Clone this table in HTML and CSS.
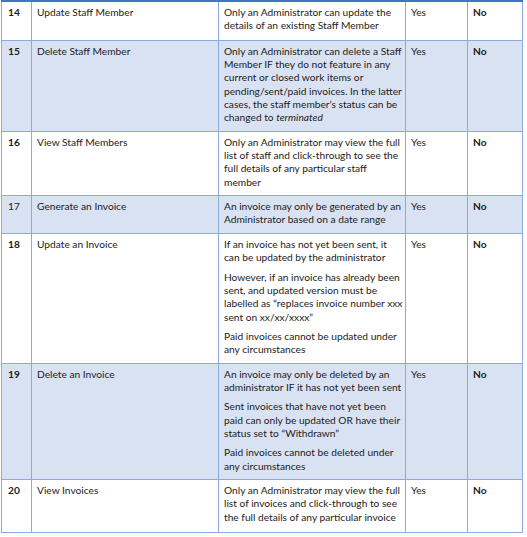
FILE: index.html
```html
<!DOCTYPE html>
<html>
<head>
<meta charset="utf-8">
<link rel="stylesheet" href="styles.css">
</head>
<body>
<table class="grid">
  <colgroup>
    <col class="c-num"><col class="c-name"><col class="c-desc"><col class="c-yes"><col class="c-no">
  </colgroup>
  <tbody>
    <tr class="first">
      <td class="num"><p>14</p></td>
      <td><p>Update Staff Member</p></td>
      <td><p>Only an Administrator can update the<br>details of an existing Staff Member</p></td>
      <td><p>Yes</p></td>
      <td class="no"><p>No</p></td>
    </tr>
    <tr class="shade">
      <td class="num"><p>15</p></td>
      <td><p>Delete Staff Member</p></td>
      <td><p>Only an Administrator can delete a Staff<br>Member IF they do not feature in any<br>current or closed work items or<br>pending/sent/paid invoices. In the latter<br>cases, the staff member’s status can be<br>changed to <em>terminated</em></p></td>
      <td><p>Yes</p></td>
      <td class="no"><p>No</p></td>
    </tr>
    <tr>
      <td class="num"><p>16</p></td>
      <td><p>View Staff Members</p></td>
      <td><p>Only an Administrator may view the full<br>list of staff and click-through to see the<br>full details of any particular staff<br>member</p></td>
      <td><p>Yes</p></td>
      <td class="no"><p>No</p></td>
    </tr>
    <tr class="shade">
      <td class="num light"><p>17</p></td>
      <td><p>Generate an Invoice</p></td>
      <td><p>An invoice may only be generated by an<br>Administrator based on a date range</p></td>
      <td><p>Yes</p></td>
      <td class="no"><p>No</p></td>
    </tr>
    <tr>
      <td class="num"><p>18</p></td>
      <td><p>Update an Invoice</p></td>
      <td>
        <p>If an invoice has not yet been sent, it<br>can be updated by the administrator</p>
        <p>However, if an invoice has already been<br>sent, and updated version must be<br>labelled as “replaces invoice number xxx<br>sent on xx/xx/xxxx”</p>
        <p>Paid invoices cannot be updated under<br>any circumstances</p>
      </td>
      <td><p>Yes</p></td>
      <td class="no"><p>No</p></td>
    </tr>
    <tr class="shade">
      <td class="num"><p>19</p></td>
      <td><p>Delete an Invoice</p></td>
      <td>
        <p>An invoice may only be deleted by an<br>administrator IF it has not yet been sent</p>
        <p>Sent invoices that have not yet been<br>paid can only be updated OR have their<br>status set to “Withdrawn”</p>
        <p>Paid invoices cannot be deleted under<br>any circumstances</p>
      </td>
      <td><p>Yes</p></td>
      <td class="no"><p>No</p></td>
    </tr>
    <tr class="last">
      <td class="num"><p>20</p></td>
      <td><p>View Invoices</p></td>
      <td><p>Only an Administrator may view the full<br>list of invoices and click-through to see<br>the full details of any particular invoice</p></td>
      <td><p>Yes</p></td>
      <td class="no"><p>No</p></td>
    </tr>
  </tbody>
</table>
</body>
</html>
```
FILE: styles.css
```css
html, body {
  margin: 0;
  padding: 0;
  background: #ffffff;
}
body {
  padding-left: 1px;
  font-family: Lato, "Liberation Sans", sans-serif;
  font-size: 10.2px;
  line-height: 13.34px;
  color: #1c1c1c;
}
.grid {
  border-collapse: collapse;
  table-layout: fixed;
  width: 521px;
}
.c-num { width: 30px; }
.c-name { width: 187px; }
.c-desc { width: 187px; }
.c-yes { width: 62px; }
.c-no { width: 55px; }
.grid td {
  border: 1px solid #8eaadb;
  vertical-align: top;
  padding: 4px 3px 0 5px;
  white-space: nowrap;
}
.grid td p {
  margin: 0 0 6px 0;
}
.grid tr.first td {
  border-top: 2px solid #4472c4;
  padding-bottom: 1px;
}
.grid tr.shade td {
  background: #d9e2f3;
}
.grid tr.last td {
  padding-bottom: 2px;
}
.grid td.num {
  padding-left: 6px;
  font-weight: 700;
}
.grid td.num.light {
  font-weight: 400;
}
.grid td.no {
  font-weight: 700;
}
```
